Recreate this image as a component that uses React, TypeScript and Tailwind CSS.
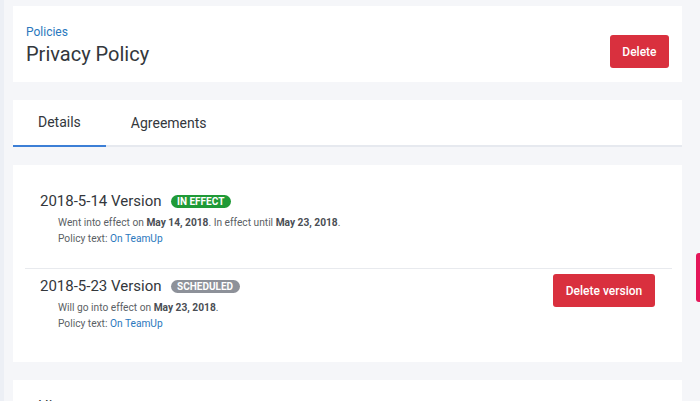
import React from "react";

function Badge({ label, color }: { label: string; color: string }) {
  return (
    <span
      className={`inline-flex items-center h-[13px] px-[6.5px] rounded-full text-[10px] leading-[13px] font-bold text-white tracking-[0px] ${color}`}
    >
      {label}
    </span>
  );
}

export default function App() {
  return (
    <div className="relative h-[401px] w-[700px] overflow-hidden bg-[#f5f6f9] flex font-['Roboto','Liberation_Sans',sans-serif]">
      <div className="w-[4px] bg-[#eceff5] shrink-0" />
      <div className="ml-[9px] w-[669px] pt-[6px] flex flex-col gap-[18px]">
        {/* Header card */}
        <div className="shrink-0 bg-white flex items-end justify-between pl-[13px] pr-[13px] pt-[18px] pb-[14px]">
          <div className="flex flex-col">
            <a className="text-[12px] leading-[16px] text-[#2b78bd]">Policies</a>
            <h1 className="text-[20px] leading-[28px] font-normal text-[#33373c]">Privacy Policy</h1>
          </div>
          <button className="h-[33px] px-[12.5px] rounded-[3px] bg-[#d9303e] text-white text-[12px] font-medium">
            Delete
          </button>
        </div>

        {/* Tabs card */}
        <div className="shrink-0 bg-white border-b-2 border-[#e6e9ef] flex">
          <div className="h-[47px] -mb-[2px] px-[25px] flex items-center border-b-2 border-[#3c7fd6] text-[14px] text-[#33373c]">
            Details
          </div>
          <div className="h-[47px] -mb-[2px] px-[25px] flex items-center text-[14px] text-[#33373c]">
            Agreements
          </div>
        </div>

        {/* Versions card */}
        <div className="shrink-0 bg-white pl-[12px] pr-[10px] h-[197px] flex flex-col">
          <div className="pt-[26px] pb-[21px] pl-[15px] pr-[17px] border-b border-[#e8eaee]">
            <div className="flex items-center gap-[9px] h-[20px]">
              <span className="text-[15px] leading-[20px] text-[#33373c]">2018-5-14 Version</span>
              <Badge label="IN EFFECT" color="bg-[#1f9a37]" />
            </div>
            <div className="mt-[4px] pl-[18px] text-[10.2px] leading-[16px] text-[#5b5f65]">
              <div>
                Went into effect on <b className="font-bold text-[#4a4e54]">May 14, 2018</b>. In effect until{" "}
                <b className="font-bold text-[#4a4e54]">May 23, 2018</b>.
              </div>
              <div>
                Policy text: <a className="text-[#2b78bd]">On TeamUp</a>
              </div>
            </div>
          </div>
          <div className="pt-[5px] pl-[15px] pr-[17px] flex justify-between items-start">
            <div className="mt-[2px]">
              <div className="flex items-center gap-[9px] h-[20px]">
                <span className="text-[15px] leading-[20px] text-[#33373c]">2018-5-23 Version</span>
                <Badge label="SCHEDULED" color="bg-[#8d9199]" />
              </div>
              <div className="mt-[4px] pl-[18px] text-[10.2px] leading-[16px] text-[#5b5f65]">
                <div>
                  Will go into effect on <b className="font-bold text-[#4a4e54]">May 23, 2018</b>.
                </div>
                <div>
                  Policy text: <a className="text-[#2b78bd]">On TeamUp</a>
                </div>
              </div>
            </div>
            <button className="h-[33px] w-[102px] rounded-[3px] bg-[#d9303e] text-white text-[12px] font-medium">
              Delete version
            </button>
          </div>
        </div>

        {/* Next card (cut off) */}
        <div className="shrink-0 bg-white px-[25px] pt-[16px] h-[120px]">
          <div className="text-[15px] leading-[20px] text-[#33373c]">History</div>
        </div>
      </div>

      {/* Floating side tab */}
      <div className="absolute right-0 top-[253px] w-[4px] h-[49px] bg-[#e5175a] rounded-l-[3px]" />
    </div>
  );
}
